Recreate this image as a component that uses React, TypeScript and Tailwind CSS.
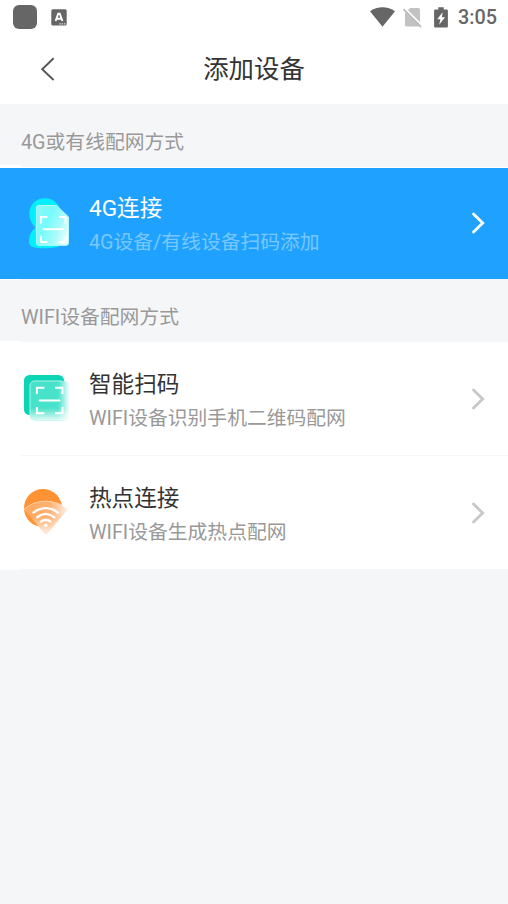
import React from 'react';

type RowProps = {
    icon: React.ReactNode;
    title: string;
    desc: string;
    active?: boolean;
};

const StatusBar: React.FC = () => (
    <div className="flex h-[34px] items-center justify-between pl-[13px] pr-[11px] text-[#666666]">
        <div className="flex items-center gap-[14px]">
            <span className="h-6 w-6 rounded-[6px] bg-[#666666]" />
            <svg width="16" height="17" viewBox="0 0 16 17">
                <rect x="0.3" y="0.3" width="15.4" height="16.2" rx="1.5" fill="#666666" />
                <path d="M4.6 12 7.2 4.8h1.6l2.6 7.2M5.4 9.8h5" fill="none" stroke="#fff" strokeWidth="1.9" />
                <path d="M8.3 14.9h1.4m.9 0H12m.9 0h1.4" stroke="#ddd" strokeWidth="1.2" />
            </svg>
        </div>
        <div className="flex items-center">
            <svg width="25" height="20" viewBox="0 0 25 20">
                <path d="M0 4.3C7.2-1 17.8-1 25 4.3L12.5 19.8Z" fill="#666666" />
            </svg>
            <svg className="ml-[8px]" width="19" height="21" viewBox="0 0 19 21">
                <path d="M7.2 1H15.2Q17 1 17 2.8V18Q17 19.5 15.2 19.5H3.8Q2 19.5 2 18V6Z" fill="#c2c2c2" />
                <path d="M1.6 1.2 19 18.6" stroke="#fff" strokeWidth="1.8" />
                <path d="M0.4 2.2 18 20" stroke="#bdbdbd" strokeWidth="1.8" />
            </svg>
            <svg className="ml-3" width="14" height="21" viewBox="0 0 14 21">
                <path d="M4.3 0.3h5.4v2.2h3q1.2 0 1.2 1.2v15.6q0 1.2-1.2 1.2H1.3Q.1 20.5.1 19.3V3.7Q.1 2.5 1.3 2.5h3Z" fill="#666666" />
                <path d="M8.7 5.2 3.2 12.2h3.2L5.2 17.8 11 10.3H7.9Z" fill="#fff" />
            </svg>
            <span className="ml-[10px] pt-px font-[Roboto] text-[19.8px] leading-6 font-medium">3:05</span>
        </div>
    </div>
);

const Header: React.FC = () => (
    <div className="grid h-[70px] grid-cols-[96px_1fr_96px] items-center">
        <svg className="ml-[40px]" width="16" height="24" viewBox="0 0 16 24">
            <path d="M13.6 1.3 2.2 12.2 13.6 23" fill="none" stroke="#555555" strokeWidth="1.9" />
        </svg>
        <h1 className="text-center text-[25.4px] leading-9 text-[#333333]">添加设备</h1>
    </div>
);

const FourGIcon: React.FC = () => (
    <svg width="50" height="54" viewBox="0 0 50 54">
        <defs>
            <linearGradient id="page" x1="0" y1="0.2" x2="1" y2="0.7">
                <stop offset="0" stopColor="#89f8fb" />
                <stop offset="0.35" stopColor="#76fbfc" />
                <stop offset="0.7" stopColor="#a8fafa" />
                <stop offset="1" stopColor="#e6ffff" />
            </linearGradient>
        </defs>
        <path d="M13.5 30.5C3 21 6 1.2 23 1.2c9 0 16 7 16 16v31c-4 2.3-9 3-17 3C12 51.2 7 50 7 45c0-6 2-11 6.5-14.5Z" fill="#05eefc" />
        <path d="M17 8.5H34.5L46.5 20V45.7q0 2.6-2.6 2.6H17q-2.6 0-2.6-2.6V11.1Q14.4 8.5 17 8.5Z" fill="url(#page)" stroke="#b9fdff" strokeWidth="1" />
        <path d="M18.9 26.5V20h6.5M37 20h6.5V26.5M18.9 38.8v6.2h6.5M37 45h6.5v-6.2" fill="none" stroke="#fff" strokeWidth="2" />
        <path d="M21.5 32.2h19.5" stroke="#fff" strokeWidth="2" strokeLinecap="round" />
    </svg>
);

const ScanIcon: React.FC = () => (
    <svg width="50" height="54" viewBox="0 0 50 54">
        <defs>
            <linearGradient id="scanX" x1="0" x2="1" y1="0" y2="0">
                <stop offset="0" stopColor="#45e2ca" />
                <stop offset="0.72" stopColor="#49e2cb" />
                <stop offset="1" stopColor="#effcfa" />
            </linearGradient>
            <linearGradient id="scanY" x1="0" x2="0" y1="0" y2="1">
                <stop offset="0.68" stopColor="#fff" stopOpacity="0" />
                <stop offset="1" stopColor="#fff" stopOpacity="0.85" />
            </linearGradient>
        </defs>
        <rect x="2" y="2" width="40" height="40" rx="5.5" fill="#0bd5b5" />
        <rect x="8" y="8" width="39" height="39.5" rx="5" fill="url(#scanX)" />
        <rect x="8" y="8" width="39" height="39.5" rx="5" fill="url(#scanY)" />
        <path d="M8 42V13q0-5 5-5h27" fill="none" stroke="#b1f2e8" strokeWidth="1" />
        <path d="M14.9 21v-6.2h7.5M33 14.8h7.5V21M14.9 34v6.2h7.5M33 40.2h7.5V34" fill="none" stroke="#fff" strokeWidth="1.9" />
        <path d="M17.5 27.6h20" stroke="#fff" strokeWidth="2" strokeLinecap="round" />
    </svg>
);

const HotspotIcon: React.FC = () => (
    <svg width="50" height="54" viewBox="0 0 50 54">
        <defs>
            <linearGradient id="fan" x1="0" x2="1" y1="0" y2="0">
                <stop offset="0" stopColor="#ffa85e" />
                <stop offset="0.6" stopColor="#ffb274" />
                <stop offset="1" stopColor="#fff4eb" />
            </linearGradient>
            <linearGradient id="fanFade" x1="0" x2="0" y1="0" y2="1">
                <stop offset="0.5" stopColor="#fff" stopOpacity="0" />
                <stop offset="1" stopColor="#fff" stopOpacity="0.8" />
            </linearGradient>
        </defs>
        <circle cx="21" cy="21" r="19" fill="#ff9233" />
        <path d="M2 22.5C14 11.5 33 11.5 46 22.5L25.5 46q-1.5 1.5-3 0Z" fill="url(#fan)" />
        <path d="M2 22.5C14 11.5 33 11.5 46 22.5L25.5 46q-1.5 1.5-3 0Z" fill="url(#fanFade)" />
        <path d="M2 22.5C12 13.2 28 11.6 40 18.5" fill="none" stroke="#ffd5b0" strokeWidth="1" />
        <g fill="none" stroke="#fff" strokeWidth="2.4" strokeLinecap="round">
            <path d="M11.5 25.6c7.5-6 17-6 24.5 0" />
            <path d="M15.2 30.2c5.5-4.3 11.5-4.3 17 0" />
            <path d="M19 34.6c3.3-2.6 6.2-2.6 9.5 0" />
        </g>
        <circle cx="23.7" cy="38.3" r="1.8" fill="#fff" />
    </svg>
);

const Row: React.FC<RowProps> = ({ icon, title, desc, active }) => (
    <button className={`flex w-full items-center pl-[22px] pr-[23px] text-left ${active ? 'h-[111px] bg-[#1fa2ff]' : 'h-[113px] bg-white'}`}>
        <span className={`w-[67px] shrink-0 ${active ? '' : 'pt-[3px]'}`}>{icon}</span>
        <span className={`flex flex-1 flex-col gap-[2px] ${active ? 'pt-[5px]' : 'pt-[7px]'}`}>
            <span className={`text-[22.6px] leading-8 ${active ? 'text-white' : 'text-[#333333]'}`}>{title}</span>
            <span className={`text-[19.8px] leading-8 ${active ? 'text-[#79c7ff]' : 'text-[#999999]'}`}>{desc}</span>
        </span>
        <svg className={active ? 'mb-px' : ''} width="14" height="22" viewBox="0 0 14 22">
            <path d="M2.5 2 11.7 11 2.5 20" fill="none" stroke={active ? '#fff' : '#c8c8c8'} strokeWidth="2.8" strokeLinecap="round" />
        </svg>
    </button>
);

const App: React.FC = () => {
    return (
        <div className="min-h-screen bg-[#f5f6f8] font-[Roboto,'Noto_Sans_CJK_SC',sans-serif]">
            <div className="bg-white">
                <StatusBar />
                <Header />
            </div>

            <div className="flex h-[61px] items-center pl-[21px] pt-4 text-[19.8px] text-[#999999]">4G或有线配网方式</div>
            <div className="h-[3px] bg-white">
                <div className="ml-[21px] h-[2px] bg-[#f5f6f8]" />
            </div>
            <Row active icon={<FourGIcon />} title="4G连接" desc="4G设备/有线设备扫码添加" />

            <div className="h-px w-[21px] bg-white" />
            <div className="flex h-[61px] items-center pl-[21px] pt-[14px] text-[19.8px] text-[#999999]">WIFI设备配网方式</div>
            <div className="bg-white">
                <div className="ml-[21px] h-px bg-[#f5f6f8]" />
                <Row icon={<ScanIcon />} title="智能扫码" desc="WIFI设备识别手机二维码配网" />
                <div className="ml-[21px] h-px bg-[#f5f6f8]" />
                <Row icon={<HotspotIcon />} title="热点连接" desc="WIFI设备生成热点配网" />
            </div>
            <div className="h-px w-[21px] bg-white" />
        </div>
    );
};

export default App;
